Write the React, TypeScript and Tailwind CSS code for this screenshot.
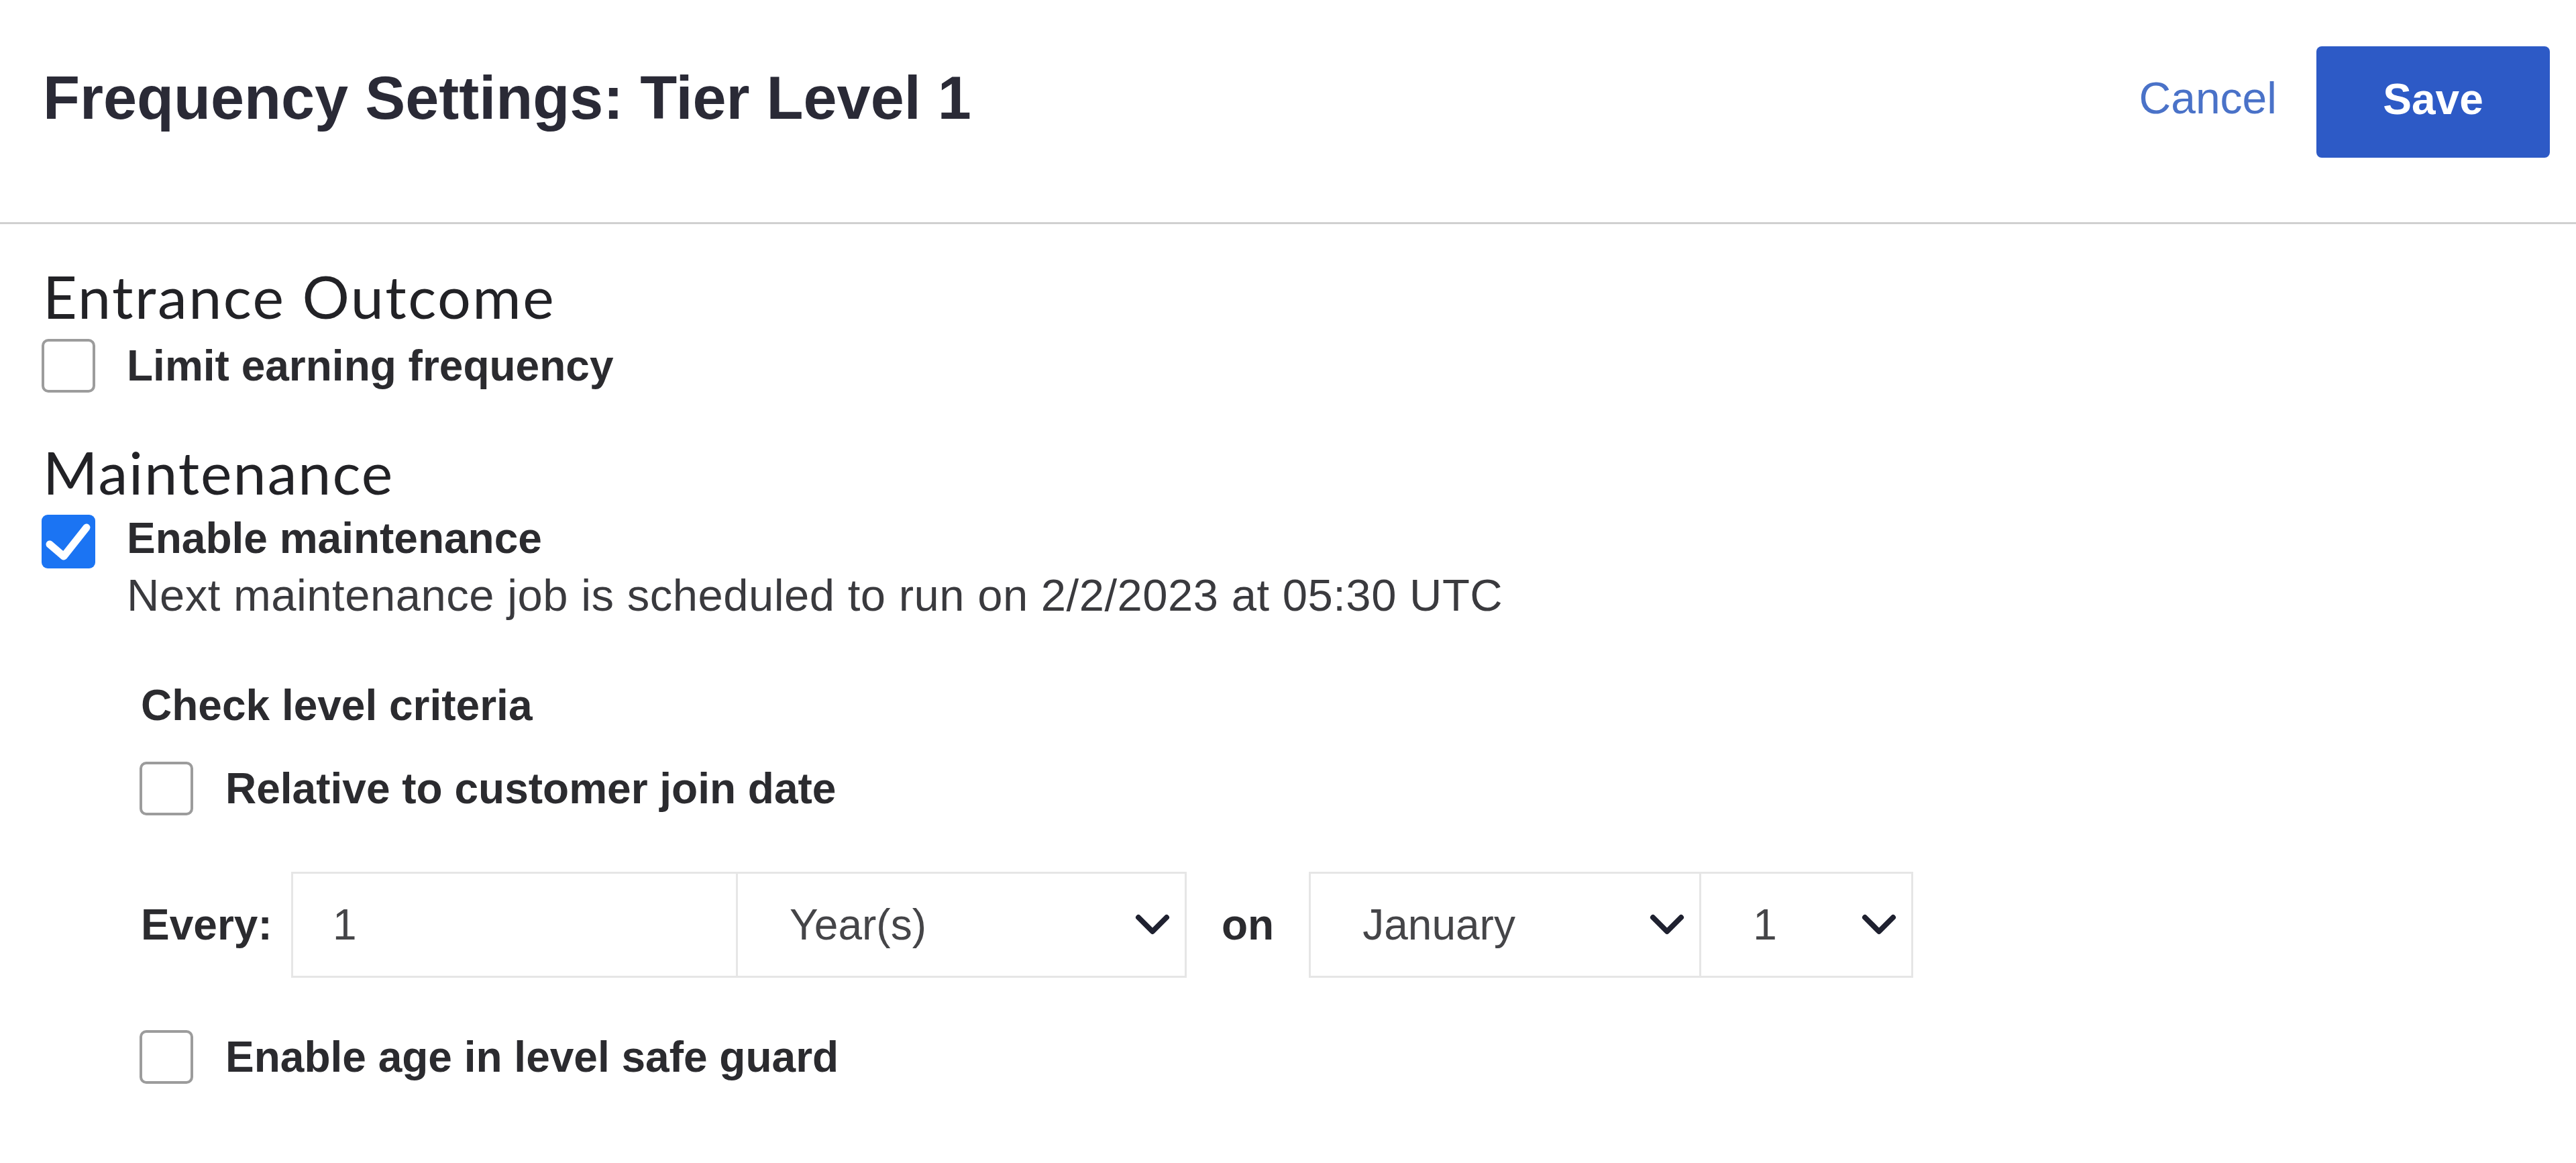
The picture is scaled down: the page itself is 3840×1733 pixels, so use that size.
const sans = "font-['Liberation_Sans',Arial,sans-serif]";

function Checkbox({ checked = false }: { checked?: boolean }) {
  if (checked) {
    return (
      <span className="flex h-[80px] w-[80px] shrink-0 items-center justify-center rounded-[9px] bg-[#1b74f3]">
        <svg viewBox="0 0 80 80" className="h-[80px] w-[80px]">
          <path
            d="M12 44 L33 62 L67 19"
            fill="none"
            stroke="#ffffff"
            strokeWidth="11"
            strokeLinecap="round"
            strokeLinejoin="round"
          />
        </svg>
      </span>
    );
  }
  return (
    <span className="block h-[80px] w-[80px] shrink-0 rounded-[10px] border-[4px] border-[#9c9c9c] bg-white" />
  );
}

function CheckRow({ label, className = "" }: { label: string; className?: string }) {
  return (
    <div className={`flex items-center gap-[48px] ${className}`}>
      <Checkbox />
      <span className="text-[64px] font-bold leading-none text-[#2b2b2f]">
        {label}
      </span>
    </div>
  );
}

function Chevron() {
  return (
    <svg viewBox="0 0 52 32" className="h-[32px] w-[52px] shrink-0">
      <path
        d="M5 5 L26 26 L47 5"
        fill="none"
        stroke="#1f2130"
        strokeWidth="8"
        strokeLinecap="round"
        strokeLinejoin="round"
      />
    </svg>
  );
}

function SelectCell({ value, className = "" }: { value: string; className?: string }) {
  return (
    <div className={`flex items-center justify-between pl-[77px] pr-[22px] ${className}`}>
      <span className="text-[64px] leading-none text-[#454548]">{value}</span>
      <Chevron />
    </div>
  );
}

export default function App() {
  return (
    <div className={`min-h-screen bg-white ${sans}`}>
      {/* Header */}
      <header className="flex h-[334px] items-start justify-between border-b-[3px] border-[#d0d0d0] pl-[64px] pr-[39px]">
        <h1 className="mt-[101px] text-[90px] font-bold leading-none text-[#2a2a36]">
          Frequency Settings: Tier Level 1
        </h1>
        <div className="mt-[69px] flex items-center gap-[59px]">
          <button className="pb-[12px] text-[66px] leading-none text-[#4a72c8]">
            Cancel
          </button>
          <button className="h-[166px] w-[348px] rounded-[8px] bg-[#2d5ac6] pb-[8px] text-[64px] font-bold leading-none text-white">
            Save
          </button>
        </div>
      </header>

      <main className="pl-[62px] pt-[63px]">
        {/* Entrance Outcome */}
        <section>
          <h2 className="ml-[2px] font-['Lato','Open_Sans',sans-serif] text-[88px] leading-none tracking-[2.5px] text-[#222226]">
            Entrance Outcome
          </h2>
          <div className="mt-[20px] flex items-center gap-[47px]">
            <Checkbox />
            <span className="text-[64px] font-bold leading-none text-[#2b2b2f]">
              Limit earning frequency
            </span>
          </div>
        </section>

        {/* Maintenance */}
        <section className="mt-[74px]">
          <h2 className="ml-[2px] font-['Lato','Open_Sans',sans-serif] text-[88px] leading-none tracking-[2px] text-[#222226]">
            Maintenance
          </h2>
          <div className="mt-[20px] flex items-start gap-[47px]">
            <Checkbox checked />
            <div className="pt-[3px]">
              <p className="text-[64px] font-bold leading-none text-[#2b2b2f]">
                Enable maintenance
              </p>
              <p className="mt-[19px] text-[67px] leading-none tracking-[0.5px] text-[#3a3a3e]">
                Next maintenance job is scheduled to run on 2/2/2023 at 05:30 UTC
              </p>
            </div>
          </div>

          <div className="ml-[146px] mt-[99px]">
            <p className="ml-[2px] text-[64px] font-bold leading-none text-[#2b2b2f]">
              Check level criteria
            </p>
            <CheckRow className="mt-[52px]" label="Relative to customer join date" />

            {/* Every row */}
            <div className="mt-[84px] flex h-[158px] items-center">
              <span className="ml-[2px] w-[224px] text-[64px] font-bold leading-none text-[#2b2b2f]">
                Every:
              </span>
              <div className="flex h-full w-[1335px] border-[3px] border-[#e6e6e6]">
                <div className="flex w-[663px] shrink-0 items-center border-r-[3px] border-[#e6e6e6] pl-[59px]">
                  <span className="text-[64px] leading-none text-[#454548]">1</span>
                </div>
                <SelectCell value="Year(s)" className="flex-1" />
              </div>
              <span className="mx-[52px] text-[64px] font-bold leading-none text-[#2b2b2f]">
                on
              </span>
              <div className="flex h-full w-[901px] border-[3px] border-[#e6e6e6]">
                <SelectCell value="January" className="w-[582px] shrink-0 border-r-[3px] border-[#e6e6e6]" />
                <SelectCell value="1" className="flex-1" />
              </div>
            </div>

            <CheckRow className="mt-[78px]" label="Enable age in level safe guard" />
          </div>
        </section>
      </main>
    </div>
  );
}
